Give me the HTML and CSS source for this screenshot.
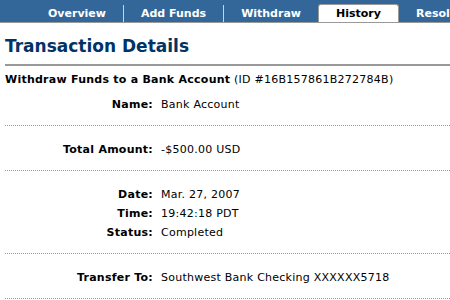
FILE: index.html
```html
<!DOCTYPE html>
<html>
<head>
<meta charset="utf-8">
<link rel="stylesheet" href="styles.css">
</head>
<body>
<nav class="tabs">
  <span class="tab sep">Overview</span>
  <span class="tab sep">Add Funds</span>
  <span class="tab">Withdraw</span>
  <span class="tab active">History</span>
  <span class="tab">Resolution Center</span>
</nav>
<main class="content">
  <h1 class="title">Transaction Details</h1>
  <div class="subject"><b>Withdraw Funds to a Bank Account</b> (ID #16B157861B272784B)</div>
  <dl class="section first">
    <dt>Name:</dt><dd>Bank Account</dd>
  </dl>
  <dl class="section">
    <dt>Total Amount:</dt><dd>-$500.00 USD</dd>
  </dl>
  <dl class="section">
    <dt>Date:</dt><dd>Mar. 27, 2007</dd>
    <dt>Time:</dt><dd>19:42:18 PDT</dd>
    <dt>Status:</dt><dd>Completed</dd>
  </dl>
  <dl class="section">
    <dt>Transfer To:</dt><dd>Southwest Bank Checking XXXXXX5718</dd>
  </dl>
</main>
</body>
</html>
```

FILE: styles.css
```css
html, body {
  margin: 0;
  padding: 0;
  background: #ffffff;
}
body {
  font-family: "DejaVu Sans", Verdana, sans-serif;
  font-size: 11px;
  color: #000000;
  overflow: hidden;
}
.tabs {
  display: flex;
  align-items: flex-end;
  height: 22px;
  background: #336699;
  border-bottom: 1px solid #999999;
  padding-left: 31px;
  white-space: nowrap;
  overflow: hidden;
}
.tab {
  flex: none;
  padding: 0 17px;
  height: 17px;
  line-height: 17px;
  color: #ffffff;
  font-weight: bold;
}
.tab.sep {
  border-right: 1px solid #c8d3e0;
}
.tab.active {
  height: 18px;
  line-height: 18px;
  background: #ffffff;
  color: #000000;
  border: 1px solid #999999;
  border-bottom: 0;
  border-radius: 3px 3px 0 0;
  margin-bottom: -1px;
}
.content {
  padding-left: 5px;
}
.title {
  margin: 13px 0 0;
  padding-bottom: 8px;
  font-size: 17px;
  line-height: 20px;
  font-weight: bold;
  color: #003366;
  border-bottom: 2px solid #999999;
}
.subject {
  padding-top: 4px;
  line-height: 19px;
  letter-spacing: 0.25px;
  white-space: nowrap;
}
.section {
  display: grid;
  grid-template-columns: 148px 1fr;
  column-gap: 8px;
  margin: 0;
  padding: 14px 0 11px;
  line-height: 19px;
  letter-spacing: 0.25px;
  border-bottom: 1px dotted #999999;
}
.section.first {
  padding-top: 6px;
}
.section dt {
  font-weight: bold;
  text-align: right;
}
.section dd {
  margin: 0;
  white-space: nowrap;
}
```
